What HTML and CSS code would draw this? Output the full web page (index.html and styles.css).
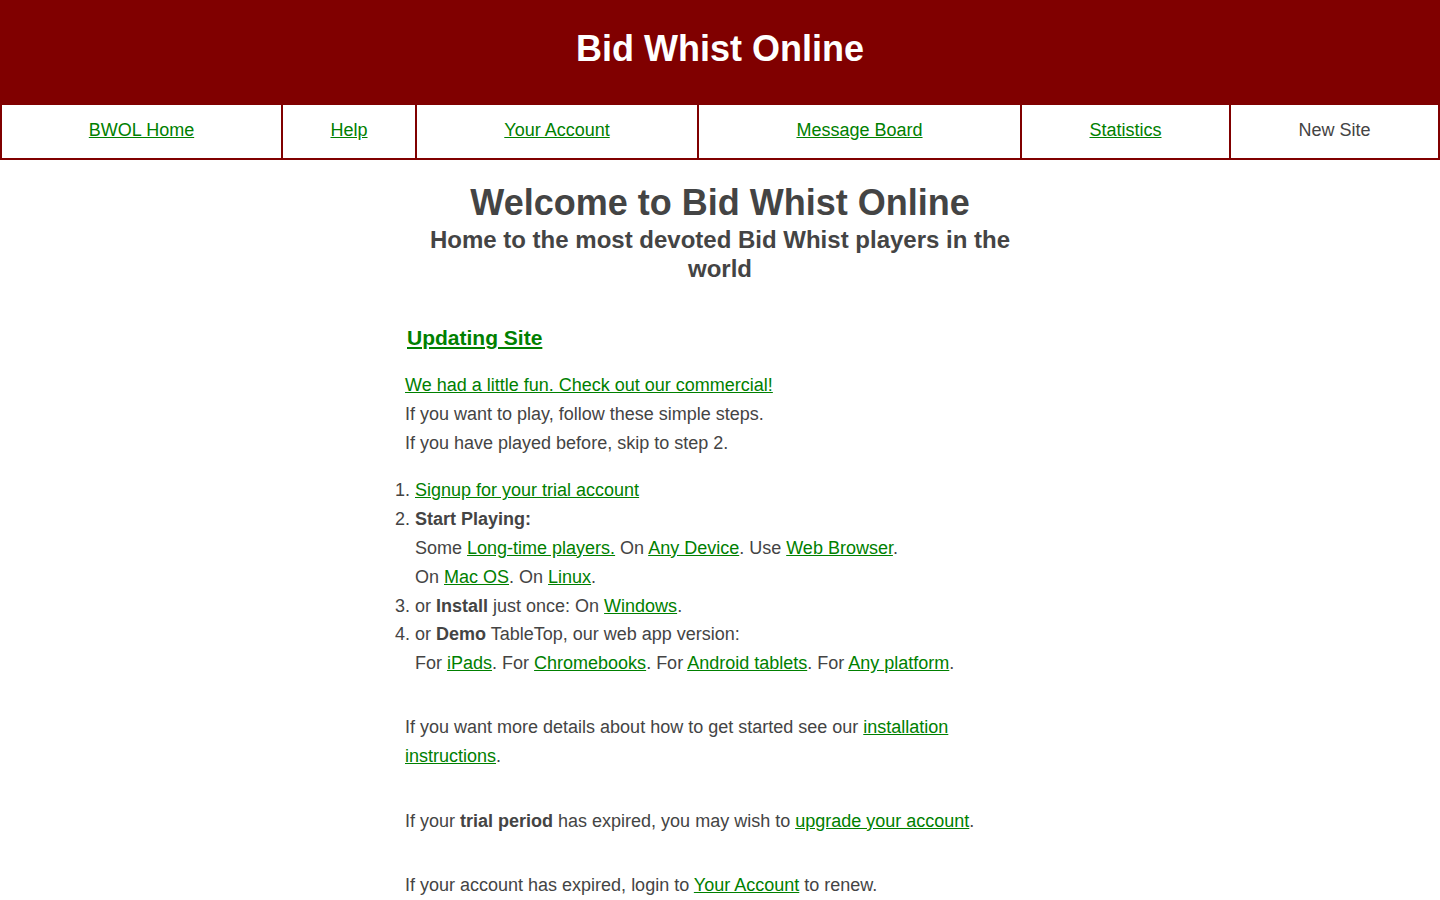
FILE: index.html
```html
<!DOCTYPE html>
<html>
<head>
<meta charset="utf-8">
<title>Bid Whist Online</title>
<link rel="stylesheet" href="styles.css">
</head>
<body>
<header class="masthead"><h1 class="site-title">Bid Whist Online</h1></header>
<nav class="nav">
  <div class="nav-cell"><a href="#">BWOL Home</a></div>
  <div class="nav-cell"><a href="#">Help</a></div>
  <div class="nav-cell"><a href="#">Your Account</a></div>
  <div class="nav-cell"><a href="#">Message Board</a></div>
  <div class="nav-cell"><a href="#">Statistics</a></div>
  <div class="nav-cell">New Site</div>
</nav>
<main class="main">
  <h2 class="welcome">Welcome to Bid Whist Online</h2>
  <h3 class="tagline">Home to the most devoted Bid Whist players in the world</h3>
  <h4 class="updating"><a href="#">Updating Site</a></h4>
  <div class="intro">
    <a href="#">We had a little fun. Check out our commercial!</a><br>
    If you want to play, follow these simple steps.<br>
    If you have played before, skip to step 2.
  </div>
  <ol class="steps">
    <li><a href="#">Signup for your trial account</a></li>
    <li><b>Start Playing:</b><br>Some <a href="#">Long-time players.</a> On <a href="#">Any Device</a>. Use <a href="#">Web Browser</a>.<br>On <a href="#">Mac OS</a>. On <a href="#">Linux</a>.</li>
    <li>or <b>Install</b> just once: On <a href="#">Windows</a>.</li>
    <li>or <b>Demo</b> TableTop, our web app version:<br>For <a href="#">iPads</a>. For <a href="#">Chromebooks</a>. For <a href="#">Android tablets</a>. For <a href="#">Any platform</a>.</li>
  </ol>
  <p class="para">If you want more details about how to get started see our <a href="#">installation instructions</a>.</p>
  <p class="para">If your <b>trial period</b> has expired, you may wish to <a href="#">upgrade your account</a>.</p>
  <p class="para">If your account has expired, login to <a href="#">Your Account</a> to renew.</p>
</main>
</body>
</html>
```
FILE: styles.css
```css
html, body {
  margin: 0;
  padding: 0;
  background: #fff;
}
body {
  font-family: "Liberation Sans", Arial, sans-serif;
  color: #444;
  font-size: 18px;
}
a { color: #008000; }
b { color: #444; }
.masthead {
  background: #800000;
  height: 104px;
  display: flex;
  align-items: center;
  justify-content: center;
}
.site-title {
  margin: 0;
  color: #fff;
  font-size: 36px;
  font-weight: bold;
  line-height: 1;
  padding-bottom: 6px;
}
.nav {
  display: grid;
  grid-template-columns: 279px 132px 280px 321px 207px 207px;
  column-gap: 2px;
  background: #800000;
  padding: 1px 2px 2px;
}
.nav-cell {
  background: #fff;
  height: 53px;
  box-sizing: border-box;
  padding-bottom: 2px;
  display: flex;
  align-items: center;
  justify-content: center;
  font-size: 18px;
}
.main {
  width: 630px;
  margin: 0 auto;
}
.welcome {
  margin: 21px 0 0;
  text-align: center;
  font-size: 36px;
  line-height: 44px;
}
.tagline {
  margin: 0;
  text-align: center;
  font-size: 24px;
  line-height: 29px;
}
.updating {
  margin: 41px 0 0 2px;
  font-size: 21px;
  line-height: 28px;
}
.intro {
  margin-top: 19px;
  line-height: 28.8px;
}
.steps {
  margin: 19px 0 -1px;
  padding-left: 10px;
  line-height: 28.8px;
}
.para {
  margin: 36px 0 0;
  line-height: 28.8px;
}
```
